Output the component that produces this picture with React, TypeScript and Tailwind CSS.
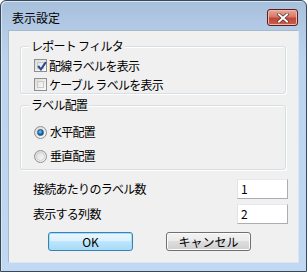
import React from 'react';

const font = { fontFamily: '"Noto Sans CJK JP", "Noto Sans", sans-serif' };

function CheckBox({ checked, label }: { checked: boolean; label: string }) {
  return (
    <div className="flex items-center h-[19px]">
      <div className="w-[13px] h-[13px] border border-[#8f8f8f] bg-gradient-to-br from-[#dcdcdc] to-[#fbfbfb] p-[2px]">
        <div className="w-full h-full border border-[#c9c9c9] bg-gradient-to-br from-[#e4e4e4] to-[#f9f9f9] relative">
          {checked && (
            <svg viewBox="0 0 9 9" className="absolute -left-[1px] -top-[2px] w-[10px] h-[10px]">
              <path d="M1 4.5 L3.5 7.5 L8 1" fill="none" stroke="#2a4a8f" strokeWidth="1.8" />
            </svg>
          )}
        </div>
      </div>
      <span className="ml-[2px] text-[12px] leading-none text-black tracking-[-0.06em]">{label}</span>
    </div>
  );
}

function Radio({ checked, label }: { checked: boolean; label: string }) {
  return (
    <div className="flex items-center h-[20px]">
      <div className="w-[13px] h-[13px] rounded-full border border-[#8f8f8f] bg-gradient-to-br from-[#d8d8d8] to-[#fafafa] flex items-center justify-center">
        {checked ? (
          <div className="w-[7px] h-[7px] rounded-full bg-[radial-gradient(circle_at_40%_35%,#7ac8f4,#1a63a8_60%,#0e3f78)] border border-[#1c4f86]" />
        ) : (
          <div className="w-[9px] h-[9px] rounded-full bg-gradient-to-br from-[#e0e0e0] to-[#f8f8f8] border border-[#d0d0d0]" />
        )}
      </div>
      <span className="ml-[3px] text-[12px] leading-none text-black tracking-[-0.06em]">{label}</span>
    </div>
  );
}

function GroupBox({ title, className, children }: { title: string; className: string; children: React.ReactNode }) {
  return (
    <div className={`relative border border-[#d5dfe5] rounded-[3px] shadow-[inset_1px_1px_0_#fff,1px_1px_0_#fff] ${className}`}>
      <span className="absolute left-[8px] -top-[8px] px-[2px] bg-[#f0f0f0] text-[12px] leading-[14px] text-black tracking-[-0.06em]">
        {title}
      </span>
      {children}
    </div>
  );
}

function Button({ label, primary }: { label: string; primary?: boolean }) {
  return (
    <div
      className={`w-[85px] h-[19px] rounded-[3px] border flex items-center justify-center text-[12px] leading-none text-black ${
        primary
          ? 'border-[#3c7fb1] bg-[linear-gradient(#eaf6fd,#d9f0fc_50%,#bee6fd_50%,#a7d9f5)] shadow-[inset_0_0_0_1px_#9de0fb]'
          : 'border-[#707070] bg-[linear-gradient(#f2f2f2,#ebebeb_50%,#dddddd_50%,#cfcfcf)] shadow-[inset_0_0_0_1px_#fcfcfc]'
      }`}
    >
      {label}
    </div>
  );
}

function Field({ value }: { value: string }) {
  return (
    <div className="w-[51px] h-[20px] border border-[#abadb3] border-t-[#e3e9ef] border-l-[#e2e3ea] bg-white pl-[3px] flex items-center text-[12px] leading-none">
      <span className="border-t border-[#abadb3] absolute hidden" />
      {value}
    </div>
  );
}

export default function App() {
  return (
    <div style={font} className="w-[307px] h-[272px] bg-white">
      <div className="w-[307px] h-[272px] flex flex-col rounded-t-[6px] border border-[#36485a] bg-[linear-gradient(180deg,#a6bfdb_0px,#b4cbe6_30px,#bcd4ee_60px,#c0d8f1)] shadow-[inset_1px_1px_0_#d8e6f4]">
        {/* title bar */}
        <div className="h-[29px] flex items-start shrink-0">
          <span className="ml-[11px] mt-[10px] text-[12px] leading-[14px] text-black">表示設定</span>
          <div className="ml-auto mr-[8px] mt-[8px] w-[31px] h-[17px] rounded-[3px] border border-[#5a1f1d] bg-[linear-gradient(#e9a99a,#d67a68_45%,#c1473a_55%,#c85e4d)] shadow-[inset_0_0_0_1px_#f0b7ab] flex items-center justify-center">
            <svg viewBox="0 0 12 10" className="w-[12px] h-[10px]">
              <path d="M2 1.5 L10 8.5 M10 1.5 L2 8.5" stroke="#5b2a25" strokeWidth="3.4" strokeLinecap="square" />
              <path d="M2 1.5 L10 8.5 M10 1.5 L2 8.5" stroke="#ffffff" strokeWidth="2" strokeLinecap="square" />
            </svg>
          </div>
        </div>
        {/* client area */}
        <div className="flex-1 flex px-[7px] pb-[8px]">
          <div className="flex-1 bg-[#f0f0f0] border border-[#a4b8cf] border-b-[#d9e6f3] border-r-[#d9e6f3] relative">
            <div className="flex flex-col pl-[11px] pt-[15px]">
              <GroupBox title="レポート フィルタ" className="w-[266px] h-[48px]">
                <div className="flex flex-col pl-[13px] pt-[9px]">
                  <CheckBox checked label="配線ラベルを表示" />
                  <CheckBox checked={false} label="ケーブル ラベルを表示" />
                </div>
              </GroupBox>
              <GroupBox title="ラベル配置" className="w-[266px] h-[65px] mt-[11px]">
                <div className="flex flex-col gap-[4px] pl-[13px] pt-[16px]">
                  <Radio checked label="水平配置" />
                  <Radio checked={false} label="垂直配置" />
                </div>
              </GroupBox>
              <div className="flex flex-col gap-[5px] mt-[9px] pl-[13px] pr-[10px]">
                <div className="flex items-center justify-between">
                  <span className="text-[12px] leading-none tracking-[-0.06em]">接続あたりのラベル数</span>
                  <Field value="1" />
                </div>
                <div className="flex items-center justify-between">
                  <span className="text-[12px] leading-none tracking-[-0.06em]">表示する列数</span>
                  <Field value="2" />
                </div>
              </div>
              <div className="flex gap-[33px] mt-[8px] pl-[28px]">
                <Button label="OK" primary />
                <Button label="キャンセル" />
              </div>
            </div>
          </div>
        </div>
      </div>
    </div>
  );
}
